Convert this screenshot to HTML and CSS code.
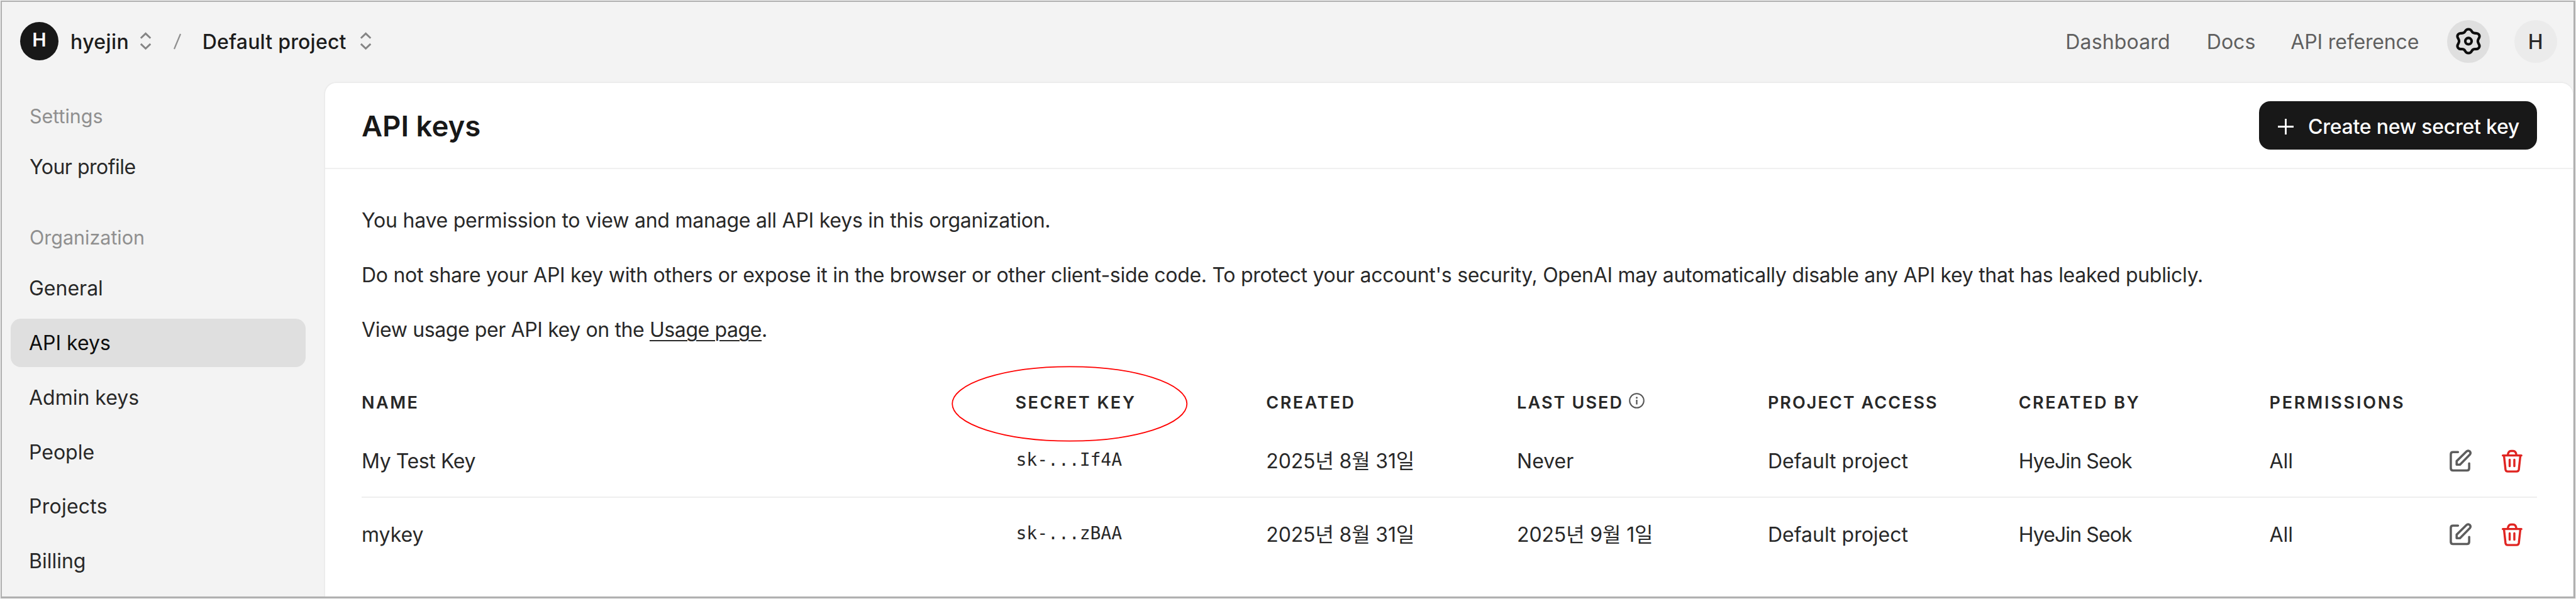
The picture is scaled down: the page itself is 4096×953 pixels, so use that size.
FILE: index.html
```
<!DOCTYPE html>
<html lang="en">
<head>
<meta charset="utf-8">
<title>API keys</title>
<link rel="stylesheet" href="styles.css">
</head>
<body>
<svg class="defs" aria-hidden="true">
  <symbol id="updown" viewBox="776 104 74 110"><path d="M783 141L812 113L841 141M783 175L812 203L841 175" fill="none" stroke="currentColor" stroke-width="11"/></symbol>
  <symbol id="edit" viewBox="140 76 140 142"><g fill="none" stroke="currentColor" stroke-width="13.5" stroke-linejoin="round" stroke-linecap="round"><path d="M194 96H164Q151 96 151 109V193Q151 206 164 206H248Q261 206 261 193V164"/><path d="M186 171V150L245 92Q255 84 265 92Q273 101 265 111L206 171Z"/></g></symbol>
  <symbol id="trash" viewBox="450 76 130 146"><g fill="none" stroke="currentColor" stroke-width="13" stroke-linecap="round" stroke-linejoin="round"><path d="M460 116H571M490 112C492 97 500 89 509 89H522C531 89 539 97 541 112M467 118L476 200Q478 212 489 212H542Q554 212 556 200L565 118M501 142V180M529 142V180"/></g></symbol>
</svg>
<div class="app">
  <header class="topbar">
    <div class="avatar">H</div>
    <div class="org">hyejin</div>
    <svg class="updown"><use href="#updown"/></svg>
    <svg class="slash" viewBox="0 0 12 24"><path d="M1 24L11 0" stroke="currentColor" stroke-width="2.2"/></svg>
    <div class="project">Default project</div>
    <svg class="updown"><use href="#updown"/></svg>
    <nav class="links">
      <a class="link-dash">Dashboard</a>
      <a class="link-docs">Docs</a>
      <a class="link-api">API reference</a>
      <span class="round gear"><svg viewBox="118 104 158 170"><g fill="none" stroke="currentColor" stroke-width="15.5"><path d="M197 117C207 117 213 121 217 130C222 140 228 142 240 141C256 140 266 152 262 165C259 173 253 179 253 188.500C253 198 259 204 262 212C266 225 256 237 240 236C228 235 222 237 217 247C213 256 207 260 197 260C187 260 181 256 177 247C172 237 166 235 154 236C138 237 128 225 132 212C135 204 141 198 141 188.500C141 179 135 173 132 165C128 152 138 140 154 141C166 142 172 140 177 130C181 121 187 117 197 117Z"/><circle cx="197" cy="188.500" r="19"/></g></svg></span>
      <span class="round user">H</span>
    </nav>
  </header>
  <div class="body">
    <aside class="sidebar">
      <h2 class="group">Settings</h2>
      <a class="item profile">Your profile</a>
      <h2 class="group second">Organization</h2>
      <a class="item">General</a>
      <a class="item active">API keys</a>
      <a class="item">Admin keys</a>
      <a class="item">People</a>
      <a class="item projects">Projects</a>
      <a class="item">Billing</a>
    </aside>
    <main class="panel">
      <div class="titlebar">
        <h1 class="title">API keys</h1>
        <button class="create"><svg viewBox="0 0 25 25"><path d="M12.500 0V25M0 12.500H25" stroke="currentColor" stroke-width="2.800"/></svg><span>Create new secret key</span></button>
      </div>
      <div class="content">
        <p class="text">You have permission to view and manage all API keys in this organization.</p>
        <p class="text warning">Do not share your API key with others or expose it in the browser or other client-side code. To protect your account's security, OpenAI may automatically disable any API key that has leaked publicly.</p>
        <p class="text usage">View usage per API key on the <a class="underlined">Usage page</a>.</p>
        <div class="table">
          <div class="row head">
            <span>NAME</span>
            <span class="secret">SECRET KEY<svg class="ring" viewBox="0 0 376 121"><ellipse cx="188" cy="60.500" rx="186.800" ry="59.300" fill="none" stroke="#f00" stroke-width="1.800"/></svg></span>
            <span>CREATED</span>
            <span class="last">LAST USED<svg class="info" viewBox="0 0 25 25"><circle cx="12.500" cy="12.500" r="11.300" fill="none" stroke="currentColor" stroke-width="2"/><circle cx="12.500" cy="7.800" r="1.500" fill="currentColor"/><path d="M12.500 11V18.500" stroke="currentColor" stroke-width="2.300"/></svg></span>
            <span class="access">PROJECT ACCESS</span>
            <span>CREATED BY</span>
            <span class="perms">PERMISSIONS</span>
          </div>
          <div class="row line">
            <span class="name">My Test Key</span>
            <span class="key">sk-...If4A</span>
            <span class="date">2025<b>년</b> 8<b>월</b> 31<b>일</b></span>
            <span>Never</span>
            <span>Default project</span>
            <span class="person">HyeJin Seok</span>
            <span>All</span>
            <span class="actions"><svg class="edit"><use href="#edit"/></svg><svg class="trash"><use href="#trash"/></svg></span>
          </div>
          <div class="row">
            <span>mykey</span>
            <span class="key">sk-...zBAA</span>
            <span class="date">2025<b>년</b> 8<b>월</b> 31<b>일</b></span>
            <span class="date">2025<b>년</b> 9<b>월</b> 1<b>일</b></span>
            <span>Default project</span>
            <span class="person">HyeJin Seok</span>
            <span>All</span>
            <span class="actions"><svg class="edit"><use href="#edit"/></svg><svg class="trash"><use href="#trash"/></svg></span>
          </div>
        </div>
      </div>
    </main>
  </div>
</div>
</body>
</html>
```
FILE: styles.css
```
* { box-sizing: border-box; }
body { margin: 0; padding: 1px; width: 4096px; height: 953px; overflow: hidden; background: #f3f3f3; color: #282828; font: 400 32px Inter, "Noto Sans CJK KR", sans-serif; white-space: nowrap; }
svg { display: block; flex: none; overflow: visible; }
.defs { width: 0; height: 0; position: absolute; }
.app { height: 951px; border: 2px solid #b0b0b0; border-width: 2px 3px 3px 2px; display: flex; flex-direction: column; background: #f3f3f3; overflow: hidden; }

.topbar { height: 127px; flex: none; padding: 0 26.3px 1px 29px; display: flex; align-items: center; font-weight: 500; color: #1c1c1c; }
.avatar { width: 61px; height: 61px; margin: 0 19px 2px 0; border-radius: 50%; background: #181818; color: #fff; display: flex; align-items: center; justify-content: center; font-size: 30px; font-weight: 600; padding-bottom: 4px; }
.org { width: 110px; letter-spacing: .4px; }
.updown { width: 19.7px; height: 29.2px; color: #858585; }
.slash { width: 12px; height: 24px; margin: 0 34px 0 34px; color: #8f8f8f; }
.project { width: 250px; letter-spacing: .2px; }
.links { margin-left: auto; display: flex; align-items: center; font-weight: 400; color: #5f5f5f; }
.link-dash { width: 224.500px; letter-spacing: .15px; }
.link-docs { width: 133.500px; }
.link-api { width: 249px; letter-spacing: -.15px; }
.round { width: 68px; height: 68px; border-radius: 50%; display: flex; align-items: center; justify-content: center; }
.gear { background: #dfdfdf; color: #0d0d0d; margin-right: 38.400px; }
.gear svg { width: 42px; height: 45.200px; }
.user { background: #ebebeb; color: #282828; font-weight: 500; }

.body { flex: 1; display: flex; min-height: 0; }
.sidebar { width: 512px; flex: none; padding: 34.500px 29px 0 14.400px; }
.group { margin: 0 0 22px; padding-left: 29.500px; height: 40px; line-height: 40px; font-size: 30.500px; font-weight: 400; color: #8f8f8f; }
.item { display: block; height: 77px; margin-bottom: 9.900px; padding-left: 28.600px; line-height: 77px; border-radius: 16px; }
.active { background: #dfdfdf; color: #0d0d0d; }
.profile { margin-bottom: 54.400px; letter-spacing: -.5px; padding-left: 29.600px; }
.projects { letter-spacing: .25px; }

.panel { flex: 1; background: #fff; border: 2px solid #ececec; border-width: 2px 1px 0 2px; border-radius: 20px 20px 0 0; }
.titlebar { height: 137px; padding: 0 57px 0 58px; border-bottom: 2px solid #f0f0f0; display: flex; align-items: center; justify-content: space-between; }
.title { margin: 0; padding-top: 2px; font-size: 45.500px; font-weight: 600; color: #181818; letter-spacing: 0; }
.create { width: 442px; height: 77px; border: 0; border-radius: 18px; background: #181818; color: #fff; font: 500 32px Inter, sans-serif; letter-spacing: -.25px; display: flex; align-items: center; padding: 3px 0 0 30px; gap: 23px; }
.create svg { width: 25px; height: 25px; }
.content { padding: 38px 57px 0 58px; }
.text { margin: 0; height: 87px; line-height: 87px; letter-spacing: -.230px; }
.warning { letter-spacing: -.290px; }
.usage { letter-spacing: -.390px; }
.underlined { text-decoration: underline; text-decoration-thickness: 2px; text-underline-offset: 5px; }
.table { margin-top: 38px; }
.row { display: grid; grid-template-columns: 1039.500px repeat(5, 398.800px) 250px 1fr; height: 117.500px; align-items: center; }
.line { border-bottom: 2px solid #eee; padding-top: 3px; }
.head { height: 68px; font-size: 27px; font-weight: 600; letter-spacing: 2.500px; }
.secret { position: relative; }
.ring { position: absolute; left: -102px; top: -42px; width: 375.500px; height: 121px; }
.last { display: flex; align-items: center; letter-spacing: 2.100px; }
.access { letter-spacing: 2.050px; }
.perms { letter-spacing: 2.800px; }
.name { letter-spacing: -.400px; }
.info { width: 25px; height: 25px; margin: 0 0 5px 9px; color: #555; }
.key { font: 28px "DejaVu Sans Mono", monospace; padding: 0 0 3px 1px; }
.date { letter-spacing: -.150px; }
.date b { font-weight: 400; font-family: "Noto Sans CJK KR", sans-serif; line-height: 1; }
.person { letter-spacing: -.900px; }
.actions { display: flex; justify-content: flex-end; align-items: center; gap: 45px; padding-right: 23px; }
.edit { width: 37.200px; height: 37.700px; color: #5d5d5d; }
.trash { width: 34.500px; height: 38.800px; color: #e02522; }
```
